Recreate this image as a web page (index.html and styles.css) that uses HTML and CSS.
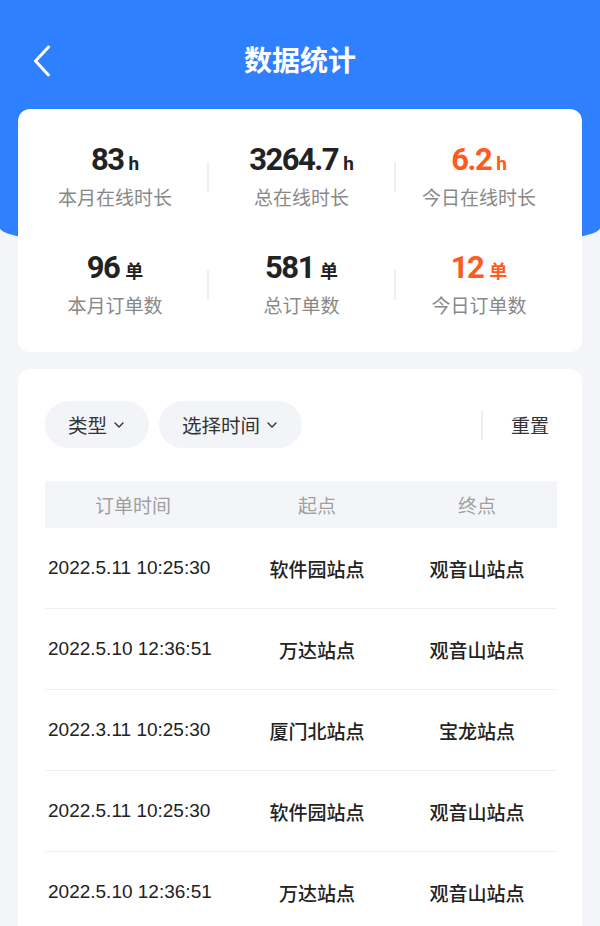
FILE: index.html
```html
<html>
    <head>
        <meta charset="utf-8">
        <link rel="stylesheet" href="styles.css">
    </head>
    <body>
        <div class="top">
            <div class="nav">
                <div class="back">
                    <svg width="18" height="32" viewBox="0 0 18 32"><path d="M15.5 2 L2.5 16 L15.5 30" fill="none" stroke="#fff" stroke-width="3" stroke-linecap="round" stroke-linejoin="round"/></svg>
                </div>
                <div class="title">数据统计</div>
                <div></div>
            </div>
        </div>

        <div class="stats">
            <div class="stat">
                <div class="val"><span class="num">83</span><span class="unit">h</span></div>
                <div class="label">本月在线时长</div>
            </div>
            <div class="sep"></div>
            <div class="stat">
                <div class="val"><span class="num">3264.7</span><span class="unit">h</span></div>
                <div class="label">总在线时长</div>
            </div>
            <div class="sep"></div>
            <div class="stat today">
                <div class="val"><span class="num">6.2</span><span class="unit">h</span></div>
                <div class="label">今日在线时长</div>
            </div>

            <div class="stat">
                <div class="val"><span class="num">96</span><span class="unit cn">单</span></div>
                <div class="label">本月订单数</div>
            </div>
            <div class="sep"></div>
            <div class="stat">
                <div class="val"><span class="num">581</span><span class="unit cn">单</span></div>
                <div class="label">总订单数</div>
            </div>
            <div class="sep"></div>
            <div class="stat today">
                <div class="val"><span class="num">12</span><span class="unit cn">单</span></div>
                <div class="label">今日订单数</div>
            </div>
        </div>

        <div class="list">
            <div class="filters">
                <div class="pill">类型
                    <svg width="10" height="6" viewBox="0 0 10 6"><path d="M1 1 L5 5 L9 1" fill="none" stroke="#333" stroke-width="1.4" stroke-linecap="round" stroke-linejoin="round"/></svg>
                </div>
                <div class="pill">选择时间
                    <svg width="10" height="6" viewBox="0 0 10 6"><path d="M1 1 L5 5 L9 1" fill="none" stroke="#333" stroke-width="1.4" stroke-linecap="round" stroke-linejoin="round"/></svg>
                </div>
                <div class="vline"></div>
                <div class="reset">重置</div>
            </div>

            <div class="thead">
                <div>订单时间</div>
                <div>起点</div>
                <div>终点</div>
            </div>

            <div class="row">
                <div class="time">2022.5.11 10:25:30</div>
                <div class="station">软件园站点</div>
                <div class="station">观音山站点</div>
            </div>
            <div class="row">
                <div class="time">2022.5.10 12:36:51</div>
                <div class="station">万达站点</div>
                <div class="station">观音山站点</div>
            </div>
            <div class="row">
                <div class="time">2022.3.11 10:25:30</div>
                <div class="station">厦门北站点</div>
                <div class="station">宝龙站点</div>
            </div>
            <div class="row">
                <div class="time">2022.5.11 10:25:30</div>
                <div class="station">软件园站点</div>
                <div class="station">观音山站点</div>
            </div>
            <div class="row">
                <div class="time">2022.5.10 12:36:51</div>
                <div class="station">万达站点</div>
                <div class="station">观音山站点</div>
            </div>
        </div>
    </body>
</html>
```

FILE: styles.css
```css
body {
    margin: 0;
    background: #f4f5f9;
    font-family: "Noto Sans CJK SC", "Noto Sans", sans-serif;
    overflow: hidden;
}

.top {
    height: 252px;
    background: #2f80fe;
    border-radius: 0 0 50% 50% / 0 0 24px 24px;
}

.nav {
    display: grid;
    grid-template-columns: 80px 1fr 80px;
    align-items: center;
    height: 56px;
    padding-top: 31px;
}

.back {
    padding-left: 33px;
    padding-top: 4px;
    display: flex;
}

.title {
    text-align: center;
    color: #fff;
    font-size: 28px;
    font-weight: bold;
}

/* stats card */
.stats {
    position: relative;
    margin: -143px 18px 0;
    background: #fff;
    border-radius: 12px;
    padding: 33px 20px 32px 5px;
    display: grid;
    grid-template-columns: 184px 2px 185px 2px 1fr;
    row-gap: 38px;
}

.stat {
    display: flex;
    flex-direction: column;
    align-items: center;
}

.sep {
    width: 2px;
    height: 30px;
    background: #eeeff2;
    align-self: center;
}

.val {
    line-height: 36px;
    height: 36px;
    color: #222;
    white-space: nowrap;
}

.num {
    font-family: Roboto, "Liberation Sans", sans-serif;
    font-weight: bold;
    font-size: 31px;
    letter-spacing: -1.5px;
}

.unit {
    font-family: Roboto, sans-serif;
    font-weight: bold;
    font-size: 19px;
    margin-left: 5px;
}

.unit.cn {
    font-family: "Noto Sans CJK SC", sans-serif;
    font-size: 18px;
    margin-left: 6px;
}

.today .val {
    color: #ff5a1f;
}

.label {
    margin-top: 4px;
    line-height: 30px;
    font-size: 19px;
    color: #888;
}

/* list card */
.list {
    margin: 17px 18px 0;
    background: #fff;
    border-radius: 12px 12px 0 0;
    padding: 32px 25px 0 27px;
}

.filters {
    display: flex;
    align-items: center;
    height: 47px;
}

.pill {
    height: 47px;
    display: flex;
    align-items: center;
    gap: 7px;
    padding: 0 25px 0 23px;
    margin-right: 10px;
    border-radius: 24px;
    background: #f3f4f8;
    font-size: 19.5px;
    color: #333;
}

.vline {
    margin-left: auto;
    width: 2px;
    height: 30px;
    background: #eeeff2;
}

.reset {
    margin: 0 8px 0 28px;
    font-size: 19px;
    color: #333;
}

.thead, .row {
    display: grid;
    grid-template-columns: 176px 192px 128px;
    align-items: center;
}

.thead {
    margin-top: 33px;
    height: 47px;
    background: #f4f5f9;
    font-size: 19px;
    color: #a0a0a0;
    text-align: center;
}

.row {
    height: 80px;
    border-bottom: 1px solid #f0f1f3;
    font-size: 19px;
    color: #222;
}

.time {
    padding-left: 3px;
    font-family: "Liberation Sans", Arial, sans-serif;
    white-space: nowrap;
}

.station {
    text-align: center;
    font-weight: 500;
}
```
